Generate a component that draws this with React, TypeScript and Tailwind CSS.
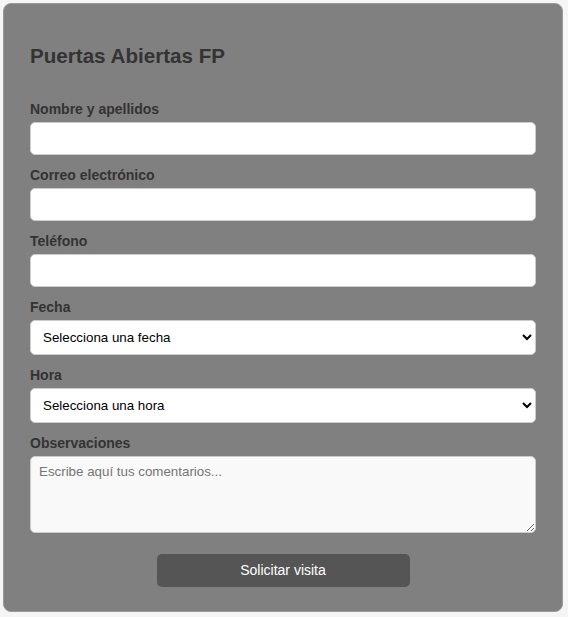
const font = { fontFamily: '"Liberation Sans", Arial, sans-serif' };

interface FieldProps {
  label: string;
  children: React.ReactNode;
  last?: boolean;
}

function Field({ label, children, last }: FieldProps) {
  return (
    <div className={last ? 'mb-[21px]' : 'mb-[12px]'}>
      <label className="mb-[5px] block text-[14px] font-bold leading-[16px] text-[#333333]">{label}</label>
      {children}
    </div>
  );
}

const inputClass =
  'block h-[33px] w-full rounded-[5px] border border-[#cccccc] bg-white px-[8px] text-[13.33px] text-[#222] outline-none';
const selectClass =
  'block h-[35px] w-full rounded-[5px] border border-[#cccccc] bg-white pl-[8px] pr-[4px] text-[13.33px] text-black outline-none';

export default function App() {
  return (
    <div className="min-h-[617px] bg-[#f5f5f5] pl-[3px] pt-[3px]" style={font}>
      <form className="w-[560px] rounded-[8px] border border-[#9a9a9a] bg-[#808080] px-[26px] pb-[24px] pt-[40px]">
        <h2 className="mb-[33px] text-[20.6px] font-bold leading-[23.5px] text-[#333333]">Puertas Abiertas FP</h2>

        <Field label="Nombre y apellidos">
          <input type="text" className={inputClass} />
        </Field>
        <Field label="Correo electrónico">
          <input type="email" className={inputClass} />
        </Field>
        <Field label="Teléfono">
          <input type="tel" className={inputClass} />
        </Field>
        <Field label="Fecha">
          <select className={selectClass} defaultValue="">
            <option value="">Selecciona una fecha</option>
          </select>
        </Field>
        <Field label="Hora">
          <select className={selectClass} defaultValue="">
            <option value="">Selecciona una hora</option>
          </select>
        </Field>
        <Field label="Observaciones" last>
          <textarea
            placeholder="Escribe aquí tus comentarios..."
            className="block h-[77px] w-full resize-y rounded-[5px] border border-[#cccccc] bg-[#f9f9f9] px-[8px] py-[6px] text-[13.33px] leading-[17px] outline-none placeholder:text-[#757575]"
          />
        </Field>

        <div className="flex justify-center">
          <button
            type="button"
            className="h-[33px] w-1/2 rounded-[5px] bg-[#555555] text-[14px] text-white"
          >
            Solicitar visita
          </button>
        </div>
      </form>
    </div>
  );
}
